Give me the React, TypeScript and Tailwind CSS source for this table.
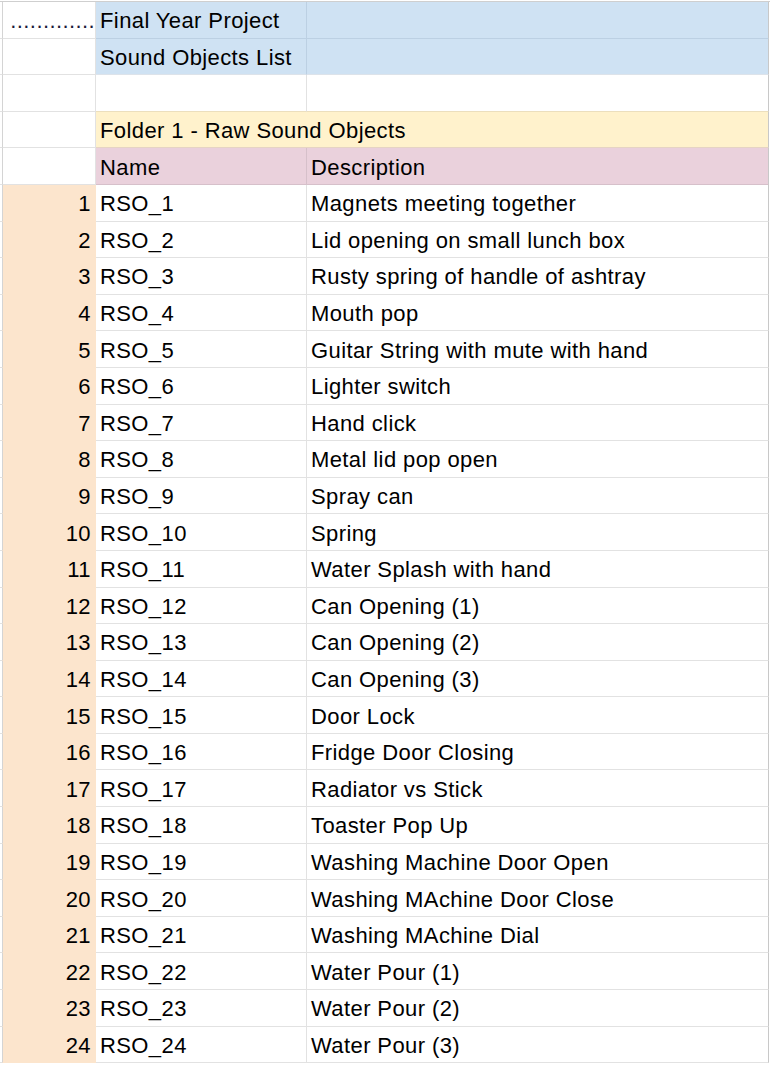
const rows = [
  "Magnets meeting together",
  "Lid opening on small lunch box",
  "Rusty spring of handle of ashtray",
  "Mouth pop",
  "Guitar String with mute with hand",
  "Lighter switch",
  "Hand click",
  "Metal lid pop open",
  "Spray can",
  "Spring",
  "Water Splash with hand",
  "Can Opening (1)",
  "Can Opening (2)",
  "Can Opening (3)",
  "Door Lock",
  "Fridge Door Closing",
  "Radiator vs Stick",
  "Toaster Pop Up",
  "Washing Machine Door Open",
  "Washing MAchine Door Close",
  "Washing MAchine Dial",
  "Water Pour (1)",
  "Water Pour (2)",
  "Water Pour (3)",
];

const rowCls = "flex h-[36.6px] shrink-0";
const cell = "flex items-center pt-[2px] box-border h-full border-b whitespace-nowrap overflow-hidden";

function HeadCell({ children, peach }: { children?: React.ReactNode; peach?: boolean }) {
  return (
    <div
      className={`${cell} w-[94px] justify-end pr-[4px] border-l border-l-[#d4d4d4] border-r ${
        peach
          ? "bg-[#fce5cd] border-b-transparent border-r-transparent"
          : "bg-white border-b-[#e2e2e2] border-r-[#e2e2e2]"
      }`}
    >
      {children}
    </div>
  );
}

export default function App() {
  return (
    <div
      className="w-[770px] h-[1066px] overflow-hidden bg-white pt-[1px] text-[22px] tracking-[0.4px] text-black"
      style={{ fontFamily: '"Liberation Sans", Arial, sans-serif' }}
    >
      <div className="flex flex-col border-t border-[#cfcfcf]">
        {/* row 1 */}
        <div className={rowCls}>
          <div className="w-[2px] h-full border-b border-[#e2e2e2]" />
          <div className={`${cell} w-[94px] justify-end pr-0 border-l border-l-[#d4d4d4] border-r border-r-[#e2e2e2] border-b-[#e2e2e2] text-[#1a1a3a]`}>
            <span className="shrink-0">.............</span>
          </div>
          <div className={`${cell} w-[211px] pl-[4px] bg-[#cfe2f3] border-r border-[#bcd0e3]`}>Final Year Project</div>
          <div className={`${cell} w-[462px] bg-[#cfe2f3] border-r border-r-[#c8c8c8] border-b-[#bcd0e3]`} />
        </div>
        {/* row 2 */}
        <div className={rowCls}>
          <div className="w-[2px] h-full border-b border-[#e2e2e2]" />
          <HeadCell />
          <div className={`${cell} w-[211px] pl-[4px] bg-[#cfe2f3] border-r border-r-[#bcd0e3] border-b-[#dde3ea]`}>Sound Objects List</div>
          <div className={`${cell} w-[462px] bg-[#cfe2f3] border-r border-r-[#c8c8c8] border-b-[#dde3ea]`} />
        </div>
        {/* row 3 */}
        <div className={rowCls}>
          <div className="w-[2px] h-full border-b border-[#e2e2e2]" />
          <HeadCell />
          <div className={`${cell} w-[211px] bg-white border-r border-r-[#e2e2e2] border-b-[#ecdfbd]`} />
          <div className={`${cell} w-[462px] bg-white border-r border-r-[#c8c8c8] border-b-[#ecdfbd]`} />
        </div>
        {/* row 4 */}
        <div className={rowCls}>
          <div className="w-[2px] h-full border-b border-[#e2e2e2]" />
          <HeadCell />
          <div className={`${cell} w-[673px] pl-[4px] bg-[#fff2cc] border-r border-r-[#c8c8c8] border-b-[#e6d4c4]`}>
            Folder 1 - Raw Sound Objects
          </div>
        </div>
        {/* row 5 */}
        <div className={rowCls}>
          <div className="w-[2px] h-full border-b border-[#e2e2e2]" />
          <HeadCell />
          <div className={`${cell} w-[211px] pl-[4px] bg-[#ead1dc] border-r border-r-[#d6c0ca] border-b-[#d6c0ca]`}>Name</div>
          <div className={`${cell} w-[462px] pl-[4px] bg-[#ead1dc] border-r border-r-[#c8c8c8] border-b-[#d6c0ca]`}>Description</div>
        </div>
        {rows.map((desc, i) => (
          <div key={i} className={rowCls}>
            <div className="w-[2px] h-full border-b border-[#e2e2e2]" />
            <HeadCell peach>{i + 1}</HeadCell>
            <div className={`${cell} w-[211px] pl-[4px] bg-white border-r border-r-[#e2e2e2] border-b-[#e2e2e2]`}>RSO_{i + 1}</div>
            <div className={`${cell} w-[462px] pl-[4px] bg-white border-r border-r-[#c8c8c8] border-b-[#e2e2e2]`}>{desc}</div>
          </div>
        ))}
      </div>
    </div>
  );
}
